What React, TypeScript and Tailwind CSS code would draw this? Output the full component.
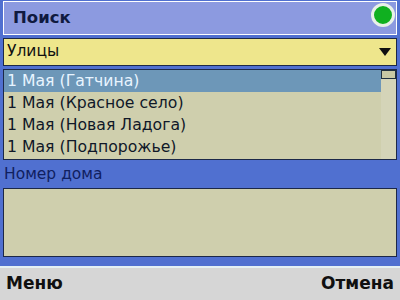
const rows = [
  "1 Мая (Гатчина)",
  "1 Мая (Красное село)",
  "1 Мая (Новая Ладога)",
  "1 Мая (Подпорожье)",
];

export default function App() {
  return (
    <div
      className="flex h-[300px] w-[400px] flex-col overflow-hidden bg-[#5070d0]"
      style={{ fontFamily: '"DejaVu Sans", Verdana, sans-serif' }}
    >
      {/* title */}
      <div className="relative mx-[3px] mt-[1px] flex h-[34px] items-center border border-white bg-[#8c9ae0] pl-[9px]">
        <span className="text-[16.5px] font-bold text-[#101a40]">Поиск</span>
        <span className="absolute right-[1px] top-[1px] h-[24px] w-[24px] rounded-full border-[3px] border-[#e8f0e8] bg-[#10b020]" />
      </div>

      {/* combo */}
      <div className="mx-[3px] mt-[3px] flex h-[28px] items-center justify-between border border-[#1c2848] bg-[#eee68c] pl-[3px] pr-[5px]">
        <span className="text-[15.5px] text-[#101010]">Улицы</span>
        <svg width="12" height="8" viewBox="0 0 12 8">
          <path d="M0 0h12L6 8z" fill="#101010" />
        </svg>
      </div>

      {/* list */}
      <div className="mx-[3px] mt-[3px] flex h-[91px] border border-[#1c2848] bg-[#cfcfad]">
        <div className="flex-1">
          {rows.map((r, i) => (
            <div
              key={r}
              className={
                i === 0
                  ? "flex h-[22px] items-center bg-[#6d97b8] pl-[3px] text-[15.7px] text-[#e8f4ff]"
                  : "flex h-[22px] items-center pl-[3px] text-[15.7px] text-[#101828]"
              }
            >
              {r}
            </div>
          ))}
        </div>
        <div className="w-[15px] bg-[#d4d4b8]">
          <div className="h-[9px] border border-[#203040] bg-[#c8c8a4]" />
        </div>
      </div>

      {/* house number */}
      <div className="flex h-[28px] items-end px-[4px] pb-[2px] text-[15.5px] text-[#102060]">
        Номер дома
      </div>
      <div className="mx-[3px] h-[69px] border border-[#1c2848] bg-[#cfcfad]" />

      <div className="flex-1" />

      {/* softkeys */}
      <div className="flex h-[34px] items-center justify-between border-t-2 border-[#e4f0f4] bg-[#d6d6d6] px-[6px] text-[17px] font-bold text-[#101010]">
        <span>Меню</span>
        <span>Отмена</span>
      </div>
    </div>
  );
}
